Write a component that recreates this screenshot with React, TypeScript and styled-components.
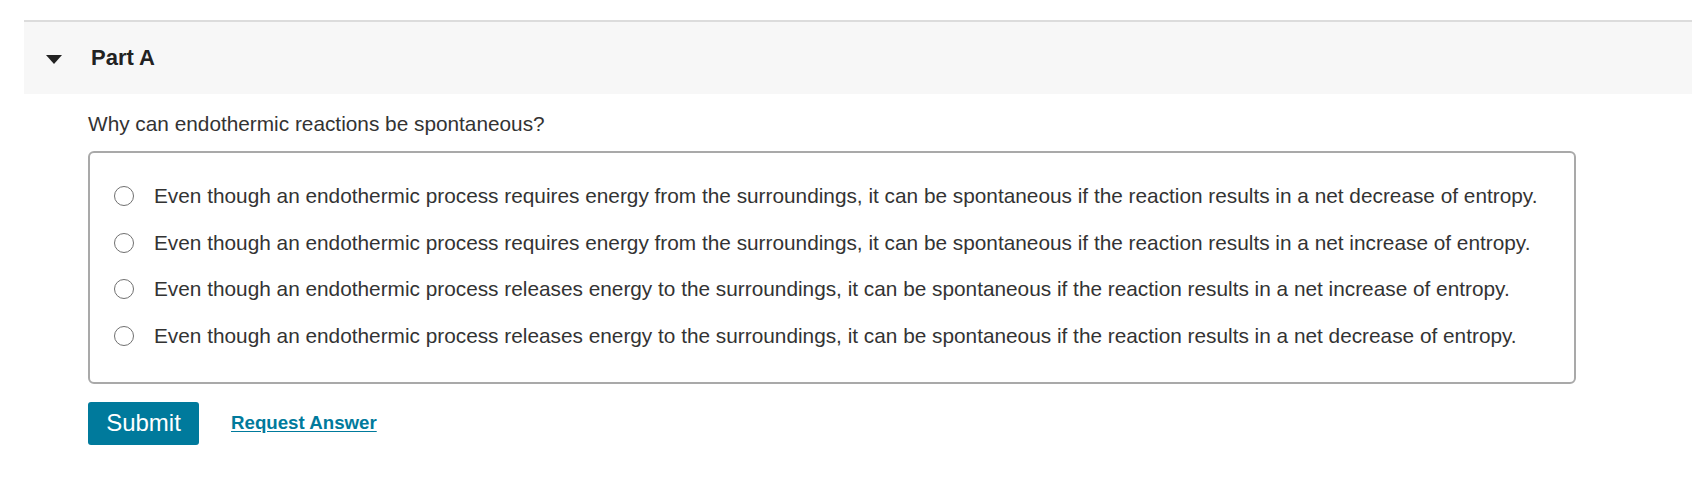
import React, { useState } from "react";
import styled, { createGlobalStyle } from "styled-components";

const GlobalStyle = createGlobalStyle`
  body {
    margin: 0;
    background: #fff;
    font-family: "Liberation Sans", Arial, Helvetica, sans-serif;
    color: #333;
  }
`;

const Page = styled.div`
  padding: 20px 0 0 24px;
`;

const PartSection = styled.section`
  border-top: 2px solid #dcdcdc;
`;

const PartHeader = styled.div`
  display: flex;
  align-items: center;
  height: 72px;
  background: #f7f7f7;
  padding-left: 22px;
  gap: 29px;

  h3 {
    margin: 0;
    font-size: 22px;
    font-weight: 700;
    color: #222;
  }
`;

const Caret = styled.span`
  width: 0;
  height: 0;
  border-left: 8px solid transparent;
  border-right: 8px solid transparent;
  border-top: 9px solid #222;
  margin-top: 2px;
`;

const PartBody = styled.div`
  padding: 18px 0 0 64px;
`;

const Question = styled.p`
  margin: 0 0 15px 0;
  font-size: 20.8px;
  line-height: 24px;
  color: #333;
`;

const OptionsBox = styled.div`
  width: 1488px;
  box-sizing: border-box;
  border: 2px solid #a9a9a9;
  border-radius: 6px;
  padding: 31px 0 34px 24px;
  display: flex;
  flex-direction: column;
  gap: 22.6px;
`;

const OptionRow = styled.label`
  display: flex;
  align-items: center;
  gap: 20px;
  font-size: 20.8px;
  line-height: 24px;
  color: #333;
  cursor: pointer;
`;

const Radio = styled.span<{ $checked: boolean }>`
  width: 20px;
  height: 20px;
  box-sizing: border-box;
  border-radius: 50%;
  border: 1.5px solid #707070;
  flex-shrink: 0;
  background: ${(p) => (p.$checked ? "radial-gradient(#007a9c 40%, #fff 45%)" : "#fff")};
`;

const Actions = styled.div`
  display: flex;
  align-items: center;
  gap: 32px;
  margin-top: 18px;
`;

const SubmitButton = styled.button`
  width: 111px;
  height: 43px;
  padding: 0;
  border: 0;
  border-radius: 3px;
  background: #007a9c;
  color: #fff;
  font-family: inherit;
  font-size: 24px;
  cursor: pointer;
`;

const RequestLink = styled.a`
  font-size: 18.7px;
  font-weight: 700;
  color: #007a9c;
  text-decoration: underline;
  text-underline-offset: 2px;
  cursor: pointer;
`;

const options = [
  "Even though an endothermic process requires energy from the surroundings, it can be spontaneous if the reaction results in a net decrease of entropy.",
  "Even though an endothermic process requires energy from the surroundings, it can be spontaneous if the reaction results in a net increase of entropy.",
  "Even though an endothermic process releases energy to the surroundings, it can be spontaneous if the reaction results in a net increase of entropy.",
  "Even though an endothermic process releases energy to the surroundings, it can be spontaneous if the reaction results in a net decrease of entropy.",
];

export default function App() {
  const [selected, setSelected] = useState(-1);

  return (
    <Page>
      <GlobalStyle />
      <PartSection>
        <PartHeader>
          <Caret />
          <h3>Part A</h3>
        </PartHeader>
        <PartBody>
          <Question>Why can endothermic reactions be spontaneous?</Question>
          <OptionsBox>
            {options.map((text, i) => (
              <OptionRow key={i} onClick={() => setSelected(i)}>
                <Radio $checked={selected === i} />
                {text}
              </OptionRow>
            ))}
          </OptionsBox>
          <Actions>
            <SubmitButton>Submit</SubmitButton>
            <RequestLink>Request Answer</RequestLink>
          </Actions>
        </PartBody>
      </PartSection>
    </Page>
  );
}
